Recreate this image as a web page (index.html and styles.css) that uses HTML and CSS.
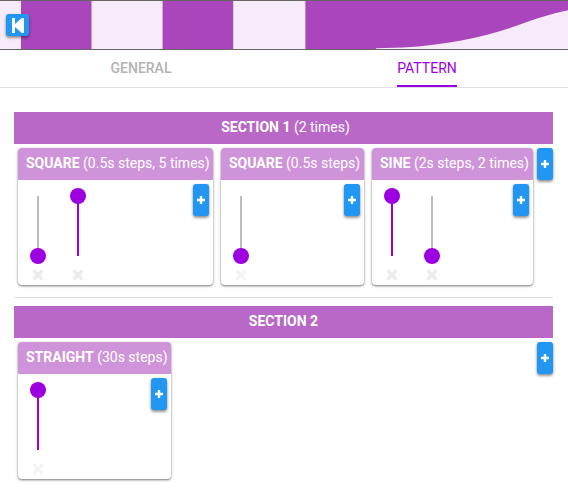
FILE: index.html
```html
<!DOCTYPE html>
<html lang="en">
<head>
<meta charset="utf-8">
<title>Pattern editor</title>
<link rel="stylesheet" href="styles.css">
</head>
<body>
<svg class="defs" width="0" height="0" aria-hidden="true">
  <symbol id="plus" viewBox="0 0 8 8"><path d="M4 0v8M0 4h8" stroke="#fff" stroke-width="2.400"/></symbol>
  <symbol id="cross" viewBox="0 0 12 12"><path d="M2.500 2.500l7 7M9.500 2.500l-7 7" stroke="currentColor" stroke-width="3.400" stroke-linecap="round"/></symbol>
</svg>
<header class="preview">
  <svg class="wave" width="568" height="48" viewBox="0 1 568 48">
    <rect y="1" width="568" height="48" fill="#f6ebf9"/>
    <g fill="#aa46bc">
      <path d="M21 1h70.500v48H21zM162.600 1h70.600v48h-70.600z"/>
      <path d="M305.400 1H568V10.300C550 14 535 19 520 24.500C490 35.500 450 45 403 47.500L376 48.300V49H305.400z"/>
    </g>
  </svg>
  <button class="rewind" aria-label="Rewind"><svg width="12" height="15" viewBox="0 0 12 15"><path d="M.5 0H2.500Q3 0 3 .5V6L9.500 .3Q10 0 10.500 0H11.500Q12 0 12 .5V14.500Q12 15 11.500 15H10.500Q10 15 9.500 14.700L3 9V14.500Q3 15 2.500 15H.5Q0 15 0 14.500V.5Q0 0 .5 0z" fill="#fff"/></svg></button>
</header>
<nav class="tabs">
  <a class="tab"><span>GENERAL</span></a>
  <a class="tab active"><span>PATTERN</span></a>
</nav>
<main>
  <section class="section">
    <h2 class="repeated"><b>SECTION 1</b> (2 times)</h2>
    <div class="row">
      <article class="card five">
        <h3><b>SQUARE</b> (0.5s steps, 5 times)</h3>
        <div class="body">
          <div class="step"><div class="slider low"></div><svg class="cross"><use href="#cross"/></svg></div>
          <div class="step"><div class="slider high"></div><svg class="cross"><use href="#cross"/></svg></div>
          <button class="add"><svg><use href="#plus"/></svg></button>
        </div>
      </article>
      <article class="card once">
        <h3><b>SQUARE</b> (0.5s steps)</h3>
        <div class="body">
          <div class="step"><div class="slider low"></div><svg class="cross disabled"><use href="#cross"/></svg></div>
          <button class="add"><svg><use href="#plus"/></svg></button>
        </div>
      </article>
      <article class="card sine">
        <h3><b>SINE</b> (2s steps, 2 times)</h3>
        <div class="body">
          <div class="step"><div class="slider high"></div><svg class="cross"><use href="#cross"/></svg></div>
          <div class="step"><div class="slider low"></div><svg class="cross"><use href="#cross"/></svg></div>
          <button class="add"><svg><use href="#plus"/></svg></button>
        </div>
      </article>
      <button class="add"><svg><use href="#plus"/></svg></button>
    </div>
  </section>
  <section class="section">
    <h2><b>SECTION 2</b></h2>
    <div class="row">
      <article class="card straight">
        <h3><b>STRAIGHT</b> (30s steps)</h3>
        <div class="body">
          <div class="step"><div class="slider high"></div><svg class="cross disabled"><use href="#cross"/></svg></div>
          <button class="add"><svg><use href="#plus"/></svg></button>
        </div>
      </article>
      <button class="add"><svg><use href="#plus"/></svg></button>
    </div>
  </section>
</main>
</body>
</html>
```
FILE: styles.css
```css
* { box-sizing: border-box; }
body { margin: 0; min-height: 490px; background: #fff; font: 14px/20px Roboto, sans-serif; }
svg { display: block; }
.defs { position: absolute; }
button { border: 0; padding: 0; display: flex; align-items: center; justify-content: center; background: #2196f3; border-radius: 3px; box-shadow: 0 1px 3px rgba(0,0,0,.24), 0 2px 3px rgba(0,0,0,.3); }

.preview { position: relative; height: 50px; border: solid #666; border-width: 1px 0; }
.rewind { position: absolute; left: 6px; top: 13px; width: 23px; height: 22px; }

.tabs { display: flex; height: 38px; border-bottom: 1px solid #e0e0e0; }
.tab { flex: 1; display: flex; justify-content: center; color: #b2b2b2; font-weight: 500; }
.tab:first-child { padding-right: 2px; }
.tab.active { padding-left: 2px; color: #9c00e0; font-weight: 400; }
.tab span { height: 37px; padding-top: 8px; }
.active span { border-bottom: 2px solid #9c00e0; }

main { padding: 24px 15px 0 14px; }
.section + .section { margin-top: 12px; padding-top: 8px; border-top: 1px solid #e0e0e0; }
h2, h3 { margin: 0; height: 32px; font-size: 14px; line-height: 30px; font-weight: 400; color: #fff; white-space: nowrap; }
h2 { background: #b968c7; text-align: center; }
.repeated { padding-left: 4px; }
h3 { background: #ce93d8; padding-left: 8px; border-radius: 4px 4px 0 0; }
b { font-weight: 700; }
.row { display: flex; align-items: flex-start; gap: 8px; padding: 4px 0 0 4px; }
.card { flex: none; height: 137px; border-radius: 4px; background: #fff; box-shadow: 0 1px 3px rgba(0,0,0,.3), 0 1px 2px rgba(0,0,0,.3); }
.five { width: 195px; }
.once { width: 143px; }
.sine { width: 161px; margin-right: -4px; }
.straight { width: 153px; }
.body { display: flex; align-items: flex-start; padding: 4px 4px 0 0; }
.step { width: 40px; display: flex; flex-direction: column; align-items: center; padding-top: 12px; }
.slider { width: 16px; height: 60px; margin-bottom: 13px; display: flex; justify-content: center; position: relative; }
.slider::before { content: ""; width: 2px; height: 60px; background: #bdbdbd; }
.slider::after { content: ""; position: absolute; left: 0; width: 16px; height: 16px; border-radius: 50%; background: #9c00e0; }
.high::before { background: #9c00e0; }
.high::after { top: -8px; }
.low::after { bottom: -8px; }
.cross { width: 12px; height: 12px; color: #ececec; }
.cross.disabled { color: #f4f4f4; }
.add { width: 16px; height: 32px; margin-left: auto; flex: none; }
.add svg { width: 8px; height: 8px; }
```
